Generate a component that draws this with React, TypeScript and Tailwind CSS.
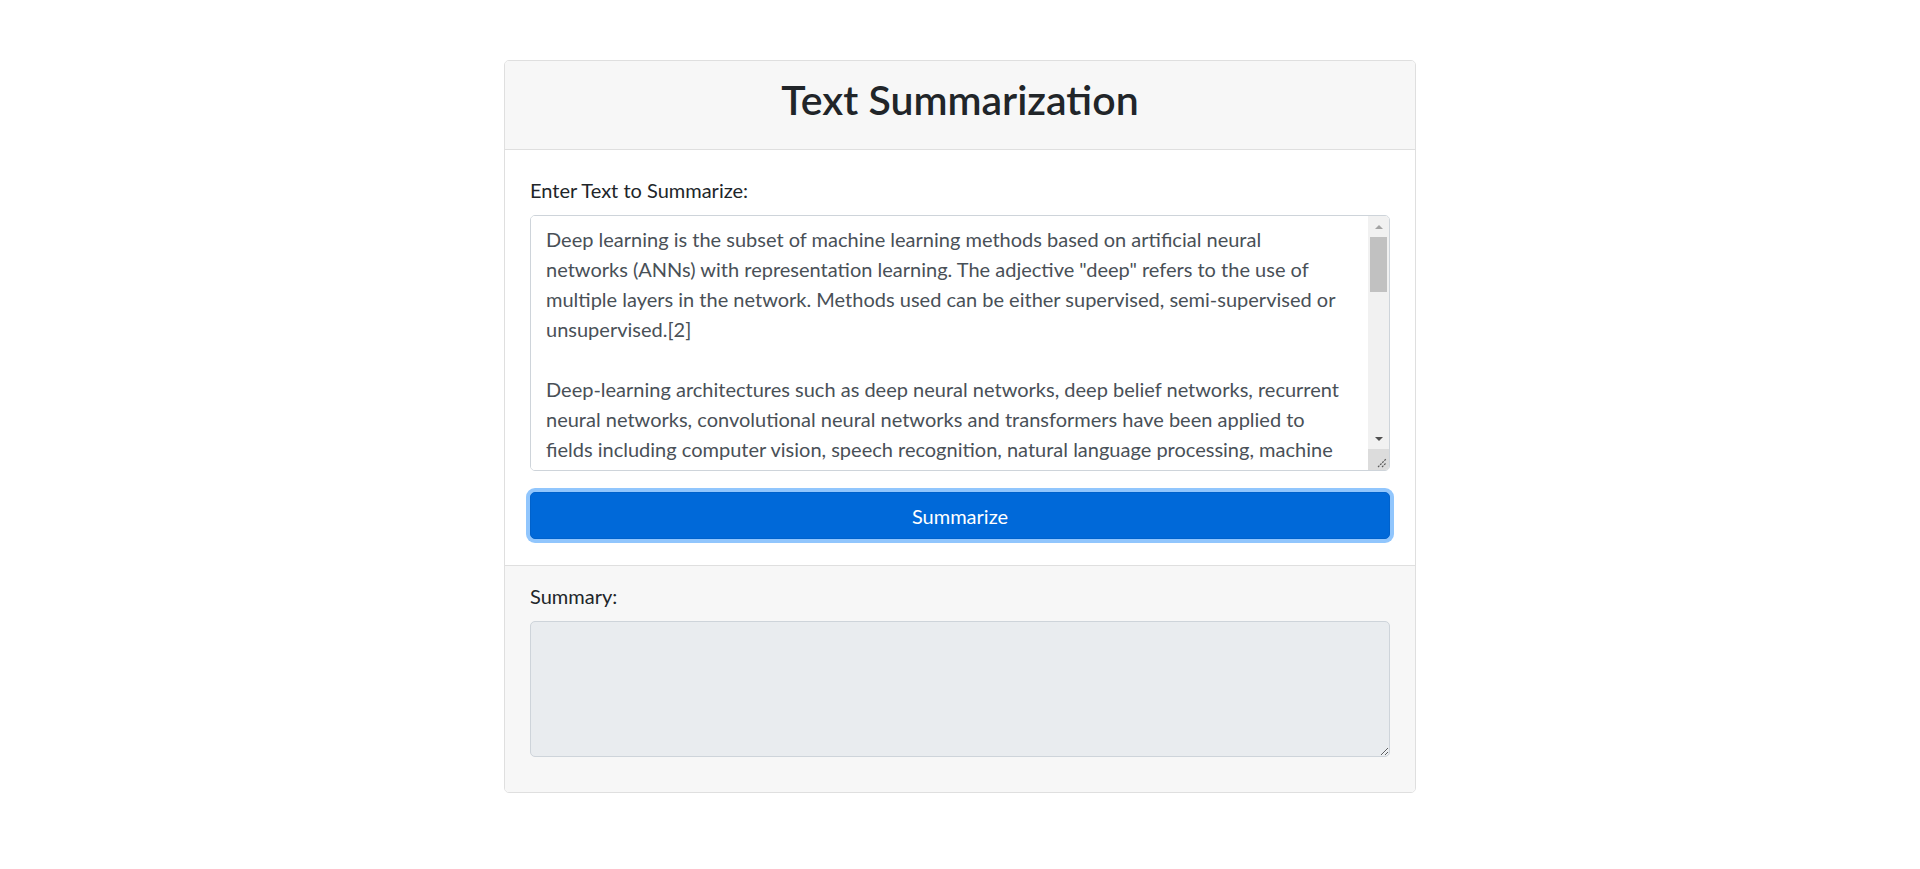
import React from 'react';

const sourceText = [
    'Deep learning is the subset of machine learning methods based on artificial neural',
    'networks (ANNs) with representation learning. The adjective "deep" refers to the use of',
    'multiple layers in the network. Methods used can be either supervised, semi-supervised or',
    'unsupervised.[2]',
    '',
    'Deep-learning architectures such as deep neural networks, deep belief networks, recurrent',
    'neural networks, convolutional neural networks and transformers have been applied to',
    'fields including computer vision, speech recognition, natural language processing, machine',
    'translation, bioinformatics, drug design, medical image analysis, climate science, material',
    'inspection and board game programs, where they have produced results comparable to and in',
    'some cases surpassing human expert performance.[3][4][5]',
].join('\n');

const Grip = () => (
    <svg width="21" height="21" viewBox="0 0 21 21">
        <line x1="10" y1="18" x2="18" y2="10" stroke="#5a5a5a" strokeWidth="1.2" strokeDasharray="2 1" />
        <line x1="14" y1="18" x2="18" y2="14" stroke="#5a5a5a" strokeWidth="1.2" strokeDasharray="2 1" />
    </svg>
);

const App = () => (
    <div className="min-h-screen w-full bg-white pt-[60px] font-['Lato',sans-serif] text-[20px] leading-[30px] text-[#212529]">
        <div className="mx-auto w-[912px] rounded-[5px] border border-[#dfdfdf] overflow-hidden">
            <div className="bg-[#f7f7f7] border-b border-[#dfdfdf] px-[25px] py-[15px]">
                <h2 className="mb-[10px] text-center text-[41px] leading-[48px] font-semibold">Text Summarization</h2>
            </div>

            <div className="bg-white px-[25px] pt-[25px] pb-[26px]">
                <label className="block mb-[10px]">Enter Text to Summarize:</label>
                <div className="mb-[21px] flex h-[256px] rounded-[5px] border border-[#ced4da] overflow-hidden">
                    <textarea
                        wrap="off"
                        defaultValue={sourceText}
                        className="flex-1 resize-none overflow-hidden whitespace-pre bg-white px-[15px] py-[7.5px] text-[20px] leading-[30px] text-[#495057] outline-none"
                    />
                    <div className="flex w-[21px] flex-col bg-[#f1f1f1]">
                        <div className="flex h-[21px] items-center justify-center">
                            <div className="h-0 w-0 border-x-[4px] border-b-[4px] border-x-transparent border-b-[#a3a3a3]" />
                        </div>
                        <div className="mx-[2px] h-[55px] bg-[#c1c1c1]" />
                        <div className="flex-1" />
                        <div className="flex h-[21px] items-center justify-center">
                            <div className="h-0 w-0 border-x-[4px] border-t-[4px] border-x-transparent border-t-[#505050]" />
                        </div>
                        <div className="h-[21px] bg-[#dcdcdc]">
                            <Grip />
                        </div>
                    </div>
                </div>
                <button className="h-[47px] w-full rounded-[5px] border border-[#0062cc] bg-[#0069d9] text-white ring-4 ring-[#91c6fd]">
                    Summarize
                </button>
            </div>

            <div className="bg-[#f7f7f7] border-t border-[#dfdfdf] px-[25px] py-[15px]">
                <label className="block mb-[10px]">Summary:</label>
                <textarea
                    readOnly
                    className="mb-[20px] block h-[136px] w-full rounded-[5px] border border-[#ced4da] bg-[#e9ecef] px-[15px] py-[7.5px] text-[#495057] outline-none"
                />
            </div>
        </div>
    </div>
);

export default App;
